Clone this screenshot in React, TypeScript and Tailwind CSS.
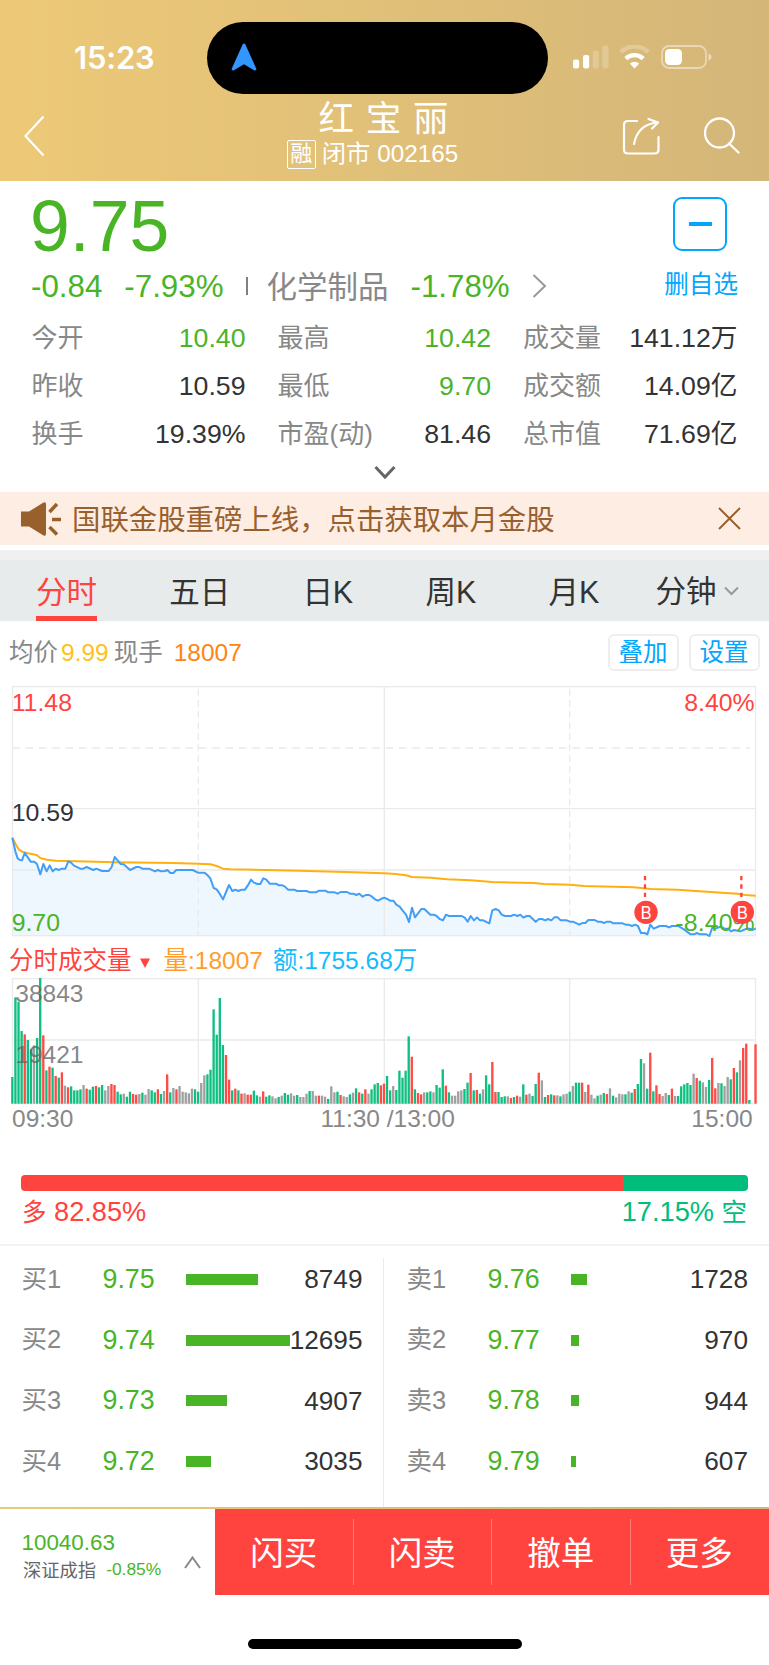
import { clsx } from 'clsx'

type Stat = { label: string; value: string; down?: boolean }
type Order = { label: string; price: string; volume: string; bar: number }

const stats: Stat[] = [
  { label: '今开', value: '10.40', down: true },
  { label: '最高', value: '10.42', down: true },
  { label: '成交量', value: '141.12万' },
  { label: '昨收', value: '10.59' },
  { label: '最低', value: '9.70', down: true },
  { label: '成交额', value: '14.09亿' },
  { label: '换手', value: '19.39%' },
  { label: '市盈(动)', value: '81.46' },
  { label: '总市值', value: '71.69亿' },
]

const tabs = ['分时', '五日', '日K', '周K', '月K']

const buys: Order[] = [
  { label: '买1', price: '9.75', volume: '8749', bar: 72 },
  { label: '买2', price: '9.74', volume: '12695', bar: 104 },
  { label: '买3', price: '9.73', volume: '4907', bar: 41 },
  { label: '买4', price: '9.72', volume: '3035', bar: 25 },
]

const sells: Order[] = [
  { label: '卖1', price: '9.76', volume: '1728', bar: 16 },
  { label: '卖2', price: '9.77', volume: '970', bar: 8.5 },
  { label: '卖3', price: '9.78', volume: '944', bar: 8 },
  { label: '卖4', price: '9.79', volume: '607', bar: 5.5 },
]

const actions = ['闪买', '闪卖', '撤单', '更多']

// chart units: 3 per css pixel
const priceLine =
  '37,473 46,514 53,535 60,540 66,541 74,519 84,533 92,545 103,545 111,552 121,583 130,552 140,574 149,556 158,574 167,566 176,570 186,566 196,566 205,544 213,548 222,557 241,566 250,566 260,561 280,570 289,566 306,573 326,573 335,561 344,531 353,541 362,552 371,553 390,570 409,561 418,561 427,566 447,566 465,574 474,570 483,574 495,573 502,570 511,579 520,579 529,570 578,570 594,578 614,578 622,585 631,595 641,624 650,628 659,641 669,658 687,615 697,633 706,629 715,633 725,629 735,629 743,617 753,599 762,608 772,612 781,612 790,595 799,599 809,611 828,611 837,616 847,616 855,620 864,629 883,629 891,633 920,633 930,637 948,637 957,632 976,632 985,637 1004,637 1013,641 1022,636 1041,636 1050,641 1060,641 1069,645 1078,641 1088,650 1097,645 1108,645 1116,650 1125,658 1134,662 1143,657 1152,653 ' +
  '1162,657 1170,662 1180,662 1189,674 1199,680 1208,692 1218,704 1227,726 1236,683 1245,712 1254,700 1264,687 1273,687 1291,704 1301,704 1310,708 1319,717 1329,721 1338,704 1347,708 1385,708 1394,713 1403,725 1412,708 1422,721 1431,712 1440,721 1450,721 1468,730 1477,691 1487,687 1496,691 1505,704 1515,708 1533,708 1542,704 1552,708 1561,704 1570,713 1580,708 1589,708 1607,725 1617,717 1626,717 1636,721 1644,717 1654,721 1663,712 1673,712 1682,721 1700,721 1710,725 1719,725 1738,734 1747,729 1756,729 1765,720 1784,720 1793,725 1802,725 1812,729 1821,725 1831,725 1840,730 1868,730 1877,734 1886,734 1896,738 1905,734 1914,738 1923,759 1934,759 1942,763 1951,734 1961,746 1979,738 1998,738 2007,742 2016,738 2035,738 2052,748 2072,763 2082,763 2091,759 2100,763 2119,763 2128,768 2137,742 2146,746 2162,740 2174,746 2184,746 2193,754 2202,750 2221,754 2240,746 2249,746 2258,750 2267,745'

const avgLine =
  '37,473 48,494 56,508 66,515 84,520 110,525 121,534 140,539 167,542 200,543 344,547 520,549 594,551 631,553 650,558 669,566 690,568 900,572 1060,577 1152,580 1187,582 1218,586 1236,591 1292,593 1342,598 1412,601 1477,606 1602,609 1632,612 1709,614 1752,618 1902,622 1952,627 2032,629 2132,636 2212,641 2237,645 2267,647'

// one entry per minute: g = down, r = up, x = flat
const volumes =
  'g80 g319 g306 g218 r208 g191 g163 x175 g197 g377 r205 g100 r111 g108 r83 g78 r94 x54 r49 g52 g40 g40 g43 x56 r45 g42 g51 r53 g49 g56 x40 x53 r59 r56 g36 g28 x30 g21 g36 r29 r27 x29 g33 x27 x44 g40 g34 r43 g29 x38 r88 g34 x47 r43 x53 x36 x34 x31 x45 g43 g36 x62 x85 g88 g102 g283 g207 g317 g176 r146 r72 g40 r45 g40 r30 x31 r27 r27 g39 g25 ' +
  'x21 r37 g21 g25 x22 x16 g20 x24 g32 g27 x31 x24 g26 x20 x20 x30 g38 x38 x24 r24 x24 x21 g14 x52 x34 g36 r26 x22 x20 g28 x33 g46 r34 g30 r43 x30 g43 g58 g62 r55 r60 g83 g40 x53 g41 g99 g78 g99 g202 r141 g43 r32 r28 x34 g34 g37 x34 g56 g48 g103 r54 g34 x24 x24 x37 x40 g44 g63 r92 g40 r41 g30 x43 g85 g58 r125 r35 g35 g20 g22 x22 r17 ' +
  'g20 r24 x21 g58 r27 x30 g23 g59 r93 x70 g20 r26 g28 r25 x25 g22 x28 x30 g36 x53 g63 g63 r63 x35 r57 x27 x16 g24 x27 g32 r29 x46 g24 x19 x30 x28 g28 x37 g33 r44 g59 g134 x121 g45 r153 g37 r55 r29 x23 x32 g26 r45 x23 g23 g52 g58 g62 g56 x90 r77 g69 x64 x50 g71 r137 r46 x62 g61 x53 x80 g73 r107 g94 x130 r167 r180 g11 x0 r178'

const barColors: Record<string, string> = { g: '#0dbf80', r: '#ff4a46', x: '#a0a0a0' }

function StatusBar() {
  return (
    <div className="h-[72px] relative flex items-center justify-between pl-[74px] pr-[56px]">
      <span className="font-['Inter'] font-semibold text-[31px] leading-none tracking-[-0.2px] -mt-[2px]">15:23</span>
      <div className="absolute left-[207px] top-0 w-[341px] h-[72px] rounded-full bg-black flex items-center pl-[24px]">
        <svg className="-mt-[2px]" width="26" height="28" viewBox="0 0 26 28">
          <path d="M13 2 L23.8 26 L13 19.5 L2.2 26 Z" fill="#3396ff" stroke="#3396ff" strokeWidth="3" strokeLinejoin="round" />
        </svg>
      </div>
      <div className="flex items-center -mt-[2px]">
        <svg width="36" height="24" viewBox="0 0 36 24" fill="#fff">
          <rect x="0" y="14.5" width="6.2" height="9" rx="2" />
          <rect x="10" y="10" width="6.2" height="13.5" rx="2" />
          <rect x="19.7" y="5.5" width="6.2" height="18" rx="2" opacity=".22" />
          <rect x="29.3" y="0.5" width="6.2" height="23" rx="2" opacity=".22" />
        </svg>
        <svg className="ml-[10px]" width="31" height="24" viewBox="0 0 31 24" fill="none" stroke="#fff">
          <path d="M1.8 7 A20 20 0 0 1 29.2 7" strokeWidth="4.5" opacity=".25" />
          <path d="M6.8 13.6 A12.5 12.5 0 0 1 24.2 13.6" strokeWidth="4.3" />
          <path d="M15.5 23.5 L10.8 18.5 A7 7 0 0 1 20.2 18.5 Z" fill="#fff" stroke="none" />
        </svg>
        <svg className="ml-[11px]" width="52" height="24" viewBox="0 0 52 24" fill="none">
          <rect x="1" y="1" width="44" height="22" rx="7" stroke="#fff" strokeWidth="1.8" opacity=".45" />
          <rect x="4" y="4" width="17" height="16" rx="4.5" fill="#fff" />
          <path d="M47.5 8.5 C51.5 10 51.5 14 47.5 15.5 Z" fill="#fff" opacity=".5" />
        </svg>
      </div>
    </div>
  )
}

function Header() {
  return (
    <header className="h-[181px] pt-[22px] text-white bg-linear-to-r from-[#edc977] to-[#d4b679]">
      <StatusBar />
      <div className="h-[87px] flex justify-between pl-[23px] pr-[29px]">
        <svg className="mt-[21px]" width="24" height="42" viewBox="0 0 24 42" fill="none" stroke="#fff" strokeWidth="2.2">
          <path d="M20.5 1.5 L2.5 21 L20.5 40.5" />
        </svg>
        <div className="flex flex-col items-center w-[180px] ml-[76px]">
          <h1 className="h-[46px] ml-[22px] text-[35.5px] leading-[50px] [word-spacing:2px] whitespace-nowrap">红 宝 丽</h1>
          <div className="flex items-center h-[29px] whitespace-nowrap">
            <span className="w-[29px] h-[29px] border-[1.5px] border-white rounded-[2px] text-[22px] leading-[26px] flex justify-center">融</span>
            <span className="ml-[6px] text-[24.3px] leading-none">闭市 002165</span>
          </div>
        </div>
        <div className="flex gap-[43px] pt-[22px]">
          <svg width="38" height="39" viewBox="0 0 38 39" fill="none" stroke="#fff" strokeWidth="2.2" strokeLinecap="round" strokeLinejoin="round">
            <path d="M15 5 H6 Q2 5 2 9 V33.5 Q2 37.5 6 37.5 H32.5 Q36.5 37.5 36.5 33.5 V21" />
            <path d="M12 28 C14 18 20 7.5 36 6.5" />
            <path d="M26.5 3 L36 6.5 L30 12.5" />
          </svg>
          <svg width="37" height="39" viewBox="0 0 37 39" fill="none" stroke="#fff" strokeWidth="2.3" strokeLinecap="round">
            <circle cx="16.5" cy="17" r="14.5" />
            <path d="M26 27.5 L35.5 36.5" />
          </svg>
        </div>
      </div>
    </header>
  )
}

function Quote() {
  return (
    <section className="h-[311px]">
      <div className="h-[129px] flex justify-between pl-[30px] pr-[31px]">
        <div>
          <div className="h-[80px] pt-[9px] text-[71.5px] leading-[72px] text-[#4ab427]">9.75</div>
          <div className="flex items-center mt-[7px] ml-[1px] h-[38px] text-[31.3px] leading-none whitespace-nowrap text-[#4ab427]">
            <span>-0.84</span>
            <span className="ml-[22px]">-7.93%</span>
            <span className="ml-[22px] -mt-[3px] w-[2px] h-[18px] bg-[#808080]" />
            <span className="ml-[19px] text-[30.5px] text-[#888]">化学制品</span>
            <span className="ml-[22px]">-1.78%</span>
            <svg className="ml-[22px] -mt-[3px]" width="15" height="24" viewBox="0 0 15 24" fill="none" stroke="#999" strokeWidth="2">
              <path d="M1.5 1 L13 12 L1.5 23" />
            </svg>
          </div>
        </div>
        <div className="flex flex-col items-end pt-[16px] text-[#03a6fd]">
          <div className="w-[54px] h-[54px] mr-[11px] border-2 border-[#03a6fd] rounded-[9px] flex items-center justify-center">
            <span className="w-[23px] h-[4px] bg-[#03a6fd]" />
          </div>
          <span className="mt-[22px] text-[24.6px] leading-none">删自选</span>
        </div>
      </div>
      <div className="grid grid-cols-[214px_213.5px_214.5px] gap-x-[32px] auto-rows-[48px] pl-[31.5px] pt-[4px] text-[26.7px] leading-[49px]">
        {stats.map((s) => (
          <div key={s.label} className="flex justify-between whitespace-nowrap">
            <span className="text-[26px] text-[#888]">{s.label}</span>
            <span className={clsx(s.down ? 'text-[#4ab427]' : 'text-[#333]')}>{s.value}</span>
          </div>
        ))}
      </div>
      <svg className="mx-auto mt-[7px]" width="22" height="15" viewBox="0 0 22 15" fill="none" stroke="#666" strokeWidth="3">
        <path d="M1.5 2 L11 12 L20.5 2" />
      </svg>
    </section>
  )
}

function Notice() {
  return (
    <div className="h-[53px] bg-[#feede3] flex items-center pl-[21px] pr-[28px] text-[#98602d]">
      <svg width="42" height="34" viewBox="0 0 42 34">
        <path d="M0 9.5 H8 L22.5 0.5 Q25 -0.5 25 2 V32 Q25 34.5 22.5 33.5 L8 24.5 H0 Z" fill="currentColor" />
        <path d="M28.5 10 L36 2 M31 17.5 H40 M28.5 25 L36 32.5" stroke="currentColor" strokeWidth="3.5" />
      </svg>
      <span className="ml-[9px] mt-[3px] text-[28.4px] leading-none whitespace-nowrap">国联金股重磅上线，点击获取本月金股</span>
      <svg className="ml-auto" width="23" height="23" viewBox="0 0 23 23" fill="none" stroke="currentColor" strokeWidth="2">
        <path d="M1 1 L22 22 M22 1 L1 22" />
      </svg>
    </div>
  )
}

function Tabs() {
  return (
    <nav className="mt-[5px] border-t-[10px] border-[#f0f0f0]">
      <div className="h-[61px] bg-[#e7ebec] flex items-stretch gap-[72.2px] pl-[36px] text-[30.5px] leading-[65px] text-[#333] whitespace-nowrap">
        {tabs.map((t, i) => (
          <div key={t} className={clsx('h-[61px]', i === 0 && 'border-b-[5px] border-[#ff4440] text-[#ff4440]')}>{t}</div>
        ))}
        <div className="-ml-[16px] flex items-center gap-[8px]">
          <span className="mt-[2px]">分钟</span>
          <svg width="15" height="10" viewBox="0 0 15 10" fill="none" stroke="#999" strokeWidth="2">
            <path d="M1 1.5 L7.5 8 L14 1.5" />
          </svg>
        </div>
      </div>
    </nav>
  )
}

function PriceChart() {
  return (
    <svg className="block" width="769" height="262" viewBox="0 0 2307 786" fontSize="74.5">
      <polygon points={`37,767 ${priceLine} 2267,767`} fill="#eef6fe" />
      <g stroke="#eaeaea" strokeWidth="4" fill="none">
        <rect x="37.5" y="20" width="2229" height="747" />
        <path d="M37 386 H2267 M37 570 H2267 M1153 20 V767" />
        <path d="M37 204 H2250" strokeDasharray="22 18" />
        <path d="M595 28 V767 M1709 28 V767" strokeDasharray="19 14" />
      </g>
      <polyline points={avgLine} fill="none" stroke="#ffb011" strokeWidth="6" strokeLinejoin="round" />
      <polyline points={priceLine} fill="none" stroke="#429ff5" strokeWidth="6" strokeLinejoin="round" />
      <text x="35" y="93" fill="#ff4440">11.48</text>
      <text x="35" y="423" fill="#333">10.59</text>
      <text x="35" y="752" fill="#4ab427">9.70</text>
      <text x="2264" y="93" fill="#ff4440" textAnchor="end">8.40%</text>
      <text x="2264" y="752" fill="#4ab427" textAnchor="end" textLength="238">-8.40%</text>
      {[1938, 2227].map((x) => (
        <g key={x}>
          <path d={`M${x - 3} 588 V652`} stroke="#ff4440" strokeWidth="7" strokeDasharray="13 12" />
          <circle cx={x} cy="697" r="35" fill="#ff4440" />
          <text x={x} y="716" fill="#fff" fontSize="51" textAnchor="middle" className="font-['Inter']">B</text>
        </g>
      ))}
    </svg>
  )
}

function VolumeChart() {
  return (
    <svg className="block" width="769" height="160" viewBox="0 108 2307 480" fontSize="73.5" fill="#888">
      <g stroke="#eaeaea" strokeWidth="4" fill="none">
        <rect x="37.5" y="116" width="2229" height="375" />
        <path d="M37 300 H2267 M595 116 V491 M1153 116 V491 M1709 116 V491" />
      </g>
      {volumes.split(' ').map((v, i) => {
        const h = Number(v.slice(1))
        return <rect key={i} x={33.5 + i * 9.29} y={491 - h} width="7" height={h} fill={barColors[v[0]]} />
      })}
      <g fill="#666" fillOpacity=".8">
        <text x="46" y="185">38843</text>
        <text x="46" y="370">19421</text>
      </g>
      <text x="36" y="561">09:30</text>
      <text x="1163" y="561" textAnchor="middle">11:30 /13:00</text>
      <text x="2258" y="561" textAnchor="end">15:00</text>
    </svg>
  )
}

function OrderColumn({ orders, className }: { orders: Order[]; className: string }) {
  return (
    <div className={className}>
      {orders.map((o) => (
        <div key={o.label} className="h-[60.7px] flex items-center leading-none">
          <span className="w-[81px] shrink-0 text-[25.5px] text-[#888]">{o.label}</span>
          <span className="w-[83px] shrink-0 text-[26.8px] text-[#4ab427]">{o.price}</span>
          <div className="w-[90px] shrink-0">
            <div className="h-[11px] bg-[#4ab427]" style={{ width: o.bar }} />
          </div>
          <span className="ml-auto text-[26.2px] text-[#333]">{o.volume}</span>
        </div>
      ))}
    </div>
  )
}

export default function App() {
  return (
    <div className="w-[769px] h-[1665px] overflow-hidden bg-white font-['Liberation_Sans','Noto_Sans_CJK_SC',sans-serif]">
      <Header />
      <Quote />
      <Notice />
      <Tabs />
      <div className="h-[59px] flex items-center pl-[9px] pr-[9.5px] text-[24.5px] leading-none text-[#888] whitespace-nowrap">
        <span className="mt-[5px]">均价</span>
        <span className="mt-[5px] ml-[3px] text-[#ffc21a]">9.99</span>
        <span className="mt-[5px] ml-[5px]">现手</span>
        <span className="mt-[5px] ml-[11px] text-[#ff8411]">18007</span>
        <button className="ml-auto mt-[3px] pt-[3px] w-[71px] h-[37px] border-2 border-[#eee] rounded-[6px] text-[#03a6fd]">叠加</button>
        <button className="ml-[10px] mt-[3px] pt-[3px] w-[71px] h-[37px] border-2 border-[#eee] rounded-[6px] text-[#03a6fd]">设置</button>
      </div>
      <PriceChart />
      <div className="h-[34px] pt-[5px] flex items-center pl-[9px] text-[24.5px] leading-none whitespace-nowrap">
        <span className="text-[#ff4440]">分时成交量</span>
        <svg className="ml-[8px] mt-[2px]" width="10" height="10" viewBox="0 0 10 10" fill="#ff4440">
          <path d="M0 0.5 H10 L5 10 Z" />
        </svg>
        <span className="ml-[14px] text-[#ff9d2d]">量:18007</span>
        <span className="ml-[10px] text-[#13bcfc]">额:1755.68万</span>
      </div>
      <VolumeChart />
      <div className="mt-[39px] ml-[20.5px] mr-[21.5px] h-[16px] flex rounded-[4px] overflow-hidden">
        <div className="w-[82.85%] bg-[#ff4440]" />
        <div className="flex-1 bg-[#00bd7b]" />
      </div>
      <div className="h-[42px] px-[22px] flex items-center justify-between text-[27.2px] leading-none">
        <span className="text-[#ff4440]"><span className="text-[24.5px]">多</span> 82.85%</span>
        <span className="text-[#00bd7b]">17.15% <span className="text-[25.5px]">空</span></span>
      </div>
      <div className="mt-[11px] h-[263px] border-t-2 border-[#f2f2f2] flex">
        <OrderColumn orders={buys} className="w-[383px] pt-[3px] pl-[21.5px] pr-[20.5px]" />
        <div className="mt-[12px] w-[1px] bg-[#ebebeb]" />
        <OrderColumn orders={sells} className="flex-1 pt-[3px] pl-[22.5px] pr-[21px]" />
      </div>
      <div className="h-[2px] bg-linear-to-r from-[#ecc977] to-[#d3b579]" />
      <footer className="h-[86px] flex">
        <div className="w-[215px] flex items-center justify-between pl-[21.5px] pr-[14px]">
          <div className="pt-[10px]">
            <div className="text-[22.4px] leading-[26px] text-[#4ab427]">10040.63</div>
            <div className="mt-[2px] flex items-center text-[18.3px] leading-[26px] whitespace-nowrap">
              <span className="ml-[1.5px] text-[#666]">深证成指</span>
              <span className="ml-[10px] -mt-[4px] text-[17.4px] text-[#4ab427]">-0.85%</span>
            </div>
          </div>
          <svg className="mt-[20px]" width="17" height="13" viewBox="0 0 17 13" fill="none" stroke="#888" strokeWidth="2">
            <path d="M1 12 L8.5 1.5 L16 12" />
          </svg>
        </div>
        <div className="flex-1 bg-[#ff4440] grid grid-cols-4 text-white text-[33.5px] leading-none">
          {actions.map((a, i) => (
            <div key={a} className="flex items-center">
              <div className={clsx('h-[66px] pt-[4px] flex-1 flex items-center justify-center border-r', i < 3 ? 'border-[#ff7a77]' : 'border-transparent')}>{a}</div>
            </div>
          ))}
        </div>
      </footer>
      <div className="mx-auto mt-[44px] w-[274px] h-[10px] rounded-full bg-black" />
    </div>
  )
}
